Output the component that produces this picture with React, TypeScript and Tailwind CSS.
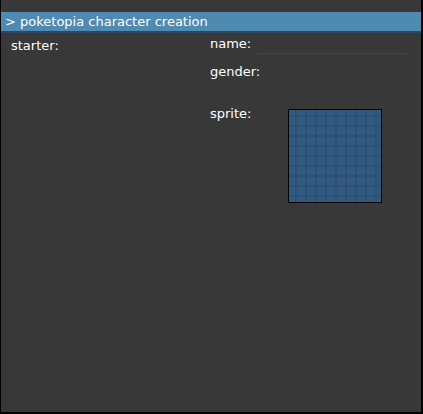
import React from "react";

export default function App() {
  const font = { fontFamily: '"DejaVu Sans", "Liberation Sans", sans-serif' };
  return (
    <div
      className="w-[423px] h-[414px] bg-[#383838] border-l border-r-2 border-b-2 border-black flex flex-col text-white text-[13px]"
      style={font}
    >
      <div className="h-[12px]" />
      <div className="h-[21px] bg-[#4f8ab0] border-b-2 border-[#2c4868] flex items-center pl-[4px] leading-none">
        <span>&gt; poketopia character creation</span>
      </div>
      <div className="flex flex-1">
        <div className="w-[209px] pl-[10px] pt-[5px]">
          <div className="leading-[15px]">starter:</div>
        </div>
        <div className="flex-1 flex flex-col pr-[15px]">
          <div className="flex items-end pt-[4px] h-[21px]">
            <span className="leading-[15px] mb-[3px]">name:</span>
            <div className="flex-1 ml-[6px] border-b border-[#474747]" />
          </div>
          <div className="pt-[10px] leading-[15px]">gender:</div>
          <div className="flex pt-[27px]">
            <span className="leading-[15px] w-[78px]">sprite:</span>
            <div
              className="mt-[3px] w-[94px] h-[94px] border border-black bg-[#315a80]"
              style={{
                backgroundImage:
                  "linear-gradient(to right, #2c5174 2px, transparent 2px), linear-gradient(to bottom, #2c5174 2px, transparent 2px)",
                backgroundSize: "10px 10px",
                backgroundPosition: "6px 5px",
              }}
            />
          </div>
        </div>
      </div>
    </div>
  );
}
